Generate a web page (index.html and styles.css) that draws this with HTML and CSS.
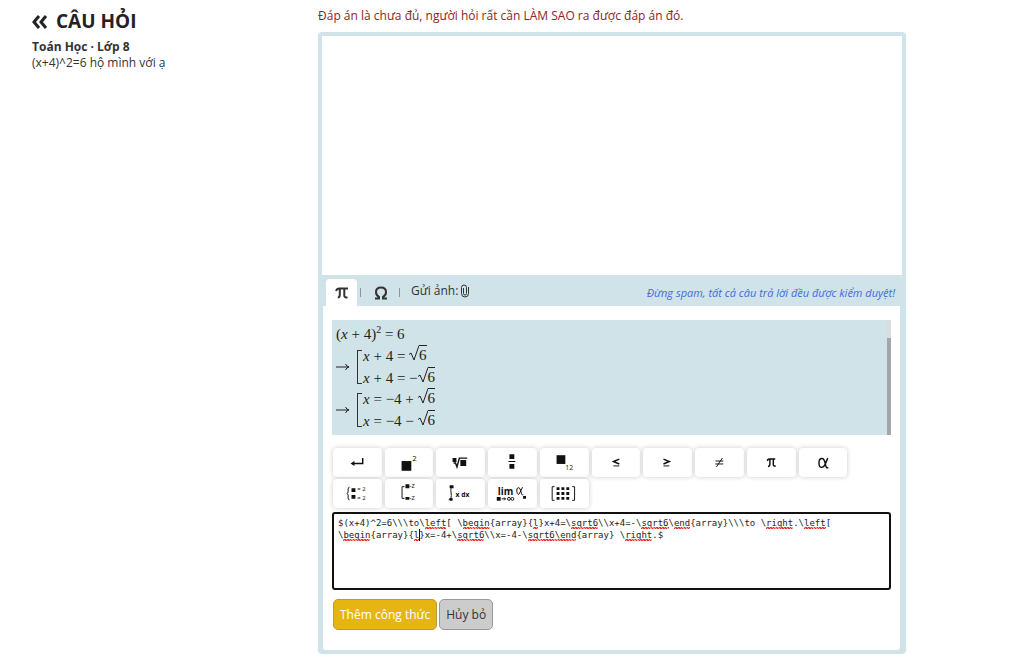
FILE: index.html
```html
<!DOCTYPE html>
<html lang="vi">
<head>
<meta charset="utf-8">
<meta name="viewport" content="width=device-width, initial-scale=1">
<title>Câu hỏi</title>
<link rel="stylesheet" href="styles.css">
</head>
<body>
<main class="page">
  <section class="question">
    <h1 class="question-title">
      <svg class="back-icon" viewBox="0 0 16 14" aria-hidden="true"><path d="M7 1 2 7l5 6M14 1 9 7l5 6"/></svg>
      <span>CÂU HỎI</span>
    </h1>
    <p class="question-subject">Toán Học · Lớp 8</p>
    <p class="question-text">(x+4)^2=6 hộ mình với ạ</p>
  </section>

  <section class="answer">
    <label class="answer-hint" for="answer">Đáp án là chưa đủ, người hỏi rất cần LÀM SAO ra được đáp án đó.</label>
    <div class="editor">
      <textarea class="answer-input" id="answer"></textarea>
      <div class="toolbar">
        <button class="tab tab-active" type="button" aria-label="Công thức"><svg viewBox="0 0 14 12"><path d="M1 4Q2 1.500 4 1.500H13M4.800 2V7.500Q4.800 10.500 2.800 10.500M9.300 2V8.500Q9.300 11 12.500 10.300"/></svg></button>
        <span class="divider"></span>
        <button class="tab" type="button" aria-label="Ký hiệu"><svg viewBox="0 0 14 14"><path d="M1 12.500H5V11Q2 9.500 2 6Q2 1.500 7 1.500T12 6Q12 9.500 9 11V12.500H13"/></svg></button>
        <span class="divider"></span>
        <button class="attach" type="button"><span>Gửi ảnh:</span><svg viewBox="0 0 10 14" aria-hidden="true"><path d="M3.500 4V9.500Q3.500 11 5 11T6.500 9.500V3.500Q6.500 1 4 1T1.500 3.500V9.500Q1.500 13 5 13T8.500 9.500V3"/></svg></button>
        <em class="warning">Đừng spam, tất cả câu trả lời đều được kiểm duyệt!</em>
      </div>

      <div class="panel">
        <div class="preview">
          <div class="math">
            <div class="math-line">(<i>x</i> + 4)<sup>2</sup> = 6</div>
            <div class="math-group">
              <svg class="arrow" viewBox="0 0 14 8"><path d="M0 4H13M9.500 1Q10.500 3.500 13 4Q10.500 4.500 9.500 7"/></svg>
              <div class="cases">
                <div class="math-line"><i>x</i> + 4 = <span class="root"><svg viewBox="0 0 10 16"><path d="M0 9.500 2 8 5 15 10 .5"/></svg><span>6</span></span></div>
                <div class="math-line"><i>x</i> + 4 = −<span class="root"><svg viewBox="0 0 10 16"><path d="M0 9.500 2 8 5 15 10 .5"/></svg><span>6</span></span></div>
              </div>
            </div>
            <div class="math-group">
              <svg class="arrow" viewBox="0 0 14 8"><path d="M0 4H13M9.500 1Q10.500 3.500 13 4Q10.500 4.500 9.500 7"/></svg>
              <div class="cases">
                <div class="math-line"><i>x</i> = −4 + <span class="root"><svg viewBox="0 0 10 16"><path d="M0 9.500 2 8 5 15 10 .5"/></svg><span>6</span></span></div>
                <div class="math-line"><i>x</i> = −4 − <span class="root"><svg viewBox="0 0 10 16"><path d="M0 9.500 2 8 5 15 10 .5"/></svg><span>6</span></span></div>
              </div>
            </div>
          </div>
          <div class="scroll-track"><div class="scroll-thumb"></div></div>
        </div>

        <div class="keys">
          <button class="key" type="button" aria-label="Xuống dòng"><svg viewBox="0 0 50 29"><path class="line" d="M30.500 10V15.500H20"/><path d="M18 15.500 22 13V18Z"/></svg></button>
          <button class="key" type="button" aria-label="Lũy thừa"><svg viewBox="0 0 50 29"><path d="M17 13H27V23H17Z"/><text x="28" y="13" font-size="8">2</text></svg></button>
          <button class="key" type="button" aria-label="Căn thức"><svg viewBox="0 0 50 29"><path d="M17 10H21V14H17ZM25 12H31V18H25Z"/><path class="line" d="M18 15H20L21.500 19 24 10H32"/></svg></button>
          <button class="key" type="button" aria-label="Phân số"><svg viewBox="0 0 50 29"><path d="M22 6H27V11H22ZM21 13H28V14H21ZM22 16H27V21H22Z"/></svg></button>
          <button class="key" type="button" aria-label="Chỉ số dưới"><svg viewBox="0 0 50 29"><path d="M17 7H26V16H17Z"/><text x="26" y="22" font-size="7">12</text></svg></button>
          <button class="key" type="button" aria-label="Nhỏ hơn hoặc bằng"><svg viewBox="0 0 50 29"><path class="line" d="M28 11 22 13.500 28 16"/><path class="thin" d="M22 18H28"/></svg></button>
          <button class="key" type="button" aria-label="Lớn hơn hoặc bằng"><svg viewBox="0 0 50 29"><path class="line" d="M21 11 27 13.500 21 16"/><path class="thin" d="M21 18H27"/></svg></button>
          <button class="key" type="button" aria-label="Khác"><svg viewBox="0 0 50 29"><path class="thin" d="M21 13H29M21 16H29M28 10 22 19"/></svg></button>
          <button class="key" type="button" aria-label="Pi"><svg viewBox="0 0 50 29"><path class="line" d="M21 13Q21 11 23 11H29M23.500 11V16Q23.500 18.500 21.500 18.500M27 11V16.500Q27 18.500 29.500 18"/></svg></button>
          <button class="key" type="button" aria-label="Alpha"><svg viewBox="0 0 50 29"><path class="line" d="M29.500 10 27 16Q25.500 19.500 23 19.500T20.500 15T23.500 10.500Q26 10.500 27 16T30 19.500"/></svg></button>
          <button class="key" type="button" aria-label="Hệ và"><svg viewBox="0 0 50 29"><path d="M19 9H23V13H19ZM19 16H23V20H19Z"/><path class="thin" d="M17 8Q15.500 8 15.500 10V13L14.500 14.500 15.500 16V19Q15.500 21 17 21"/><text x="25" y="12" font-size="6">= 2</text><text x="25" y="21" font-size="6">= 2</text></svg></button>
          <button class="key" type="button" aria-label="Hệ hoặc"><svg viewBox="0 0 50 29"><path d="M21 5H25V9H21ZM21 18H25V21H21Z"/><path class="thin" d="M20 7.500H17.500V19.500H20"/><text x="25" y="9" font-size="7">-z</text><text x="25" y="21" font-size="7">-z</text></svg></button>
          <button class="key" type="button" aria-label="Tích phân"><svg viewBox="0 0 50 29"><path d="M14 6H18V9H14ZM14 19H17V22H14Z"/><path class="thin" d="M17 8Q14.500 8 15.500 14T13 21"/><text class="bold" x="20" y="18" font-size="7">x dx</text></svg></button>
          <button class="key" type="button" aria-label="Giới hạn"><svg viewBox="0 0 50 29"><text class="bold" x="10" y="16" font-size="10">lim</text><path d="M9 18H13V22H9ZM36 17H39V20H36Z"/><path class="thin" d="M14 20H18M16.500 18.500 18 20 16.500 21.500"/><circle class="thin" cx="21.500" cy="20" r="1.500"/><circle class="thin" cx="25" cy="20" r="1.500"/><path class="thin" d="M35.500 8 33 13Q32 15.500 31 15.500T29.500 12T31.500 8.500Q33 8.500 34 13T36 15.500"/></svg></button>
          <button class="key" type="button" aria-label="Ma trận"><svg viewBox="0 0 50 29"><path d="M17 8h3v3h-3zM22 8h3v3h-3zM27 8h3v3h-3zM17 13h3v3h-3zM22 13h3v3h-3zM27 13h3v3h-3zM17 18h3v3h-3zM22 18h3v3h-3zM27 18h3v3h-3z"/><path class="thin" d="M15 7.500H12.500V21.500H15M33 7.500H35.500V21.500H33"/></svg></button>
        </div>

        <div class="formula">
          <textarea class="formula-input" aria-label="Công thức LaTeX" spellcheck="false">$(x+4)^2=6\\\to\left[ \begin{array}{l}x+4=\sqrt6\\x+4=-\sqrt6\end{array}\\\to \right.\left[
\begin{array}{l}x=-4+\sqrt6\\x=-4-\sqrt6\end{array} \right.$</textarea>
          <div class="marks" aria-hidden="true">
            <span class="mark" style="--c:16;--n:4"></span>
            <span class="mark" style="--c:23;--n:5"></span>
            <span class="mark" style="--c:36;--n:1"></span>
            <span class="mark" style="--c:43;--n:5"></span>
            <span class="mark" style="--c:56;--n:5"></span>
            <span class="mark" style="--c:62;--n:3"></span>
            <span class="mark" style="--c:79;--n:5"></span>
            <span class="mark" style="--c:86;--n:4"></span>
            <span class="mark row-2" style="--c:1;--n:5"></span>
            <span class="mark row-2" style="--c:14;--n:1"></span>
            <span class="mark row-2" style="--c:22;--n:5"></span>
            <span class="mark row-2" style="--c:35;--n:9"></span>
            <span class="mark row-2" style="--c:53;--n:5"></span>
            <span class="caret" style="--c:15"></span>
          </div>
        </div>

        <div class="actions">
          <button class="btn btn-primary" type="button">Thêm công thức</button>
          <button class="btn" type="button">Hủy bỏ</button>
        </div>
      </div>
    </div>
  </section>
</main>
</body>
</html>
```
FILE: styles.css
```css
* { box-sizing: border-box; }

body {
  margin: 0;
  background: #fff;
  color: #333;
  font: 12px/16px "Open Sans", "Noto Sans", sans-serif;
}

button, textarea { font: inherit; color: inherit; }
button { padding: 0; border: 0; background: none; cursor: pointer; }
textarea { display: block; width: 100%; resize: none; outline: none; }
p { margin: 0; }
svg { fill: none; stroke: currentColor; }

.page {
  display: grid;
  grid-template-columns: 286fr 588fr;
  padding: 8px 118px 2px 32px;
}

.question-title {
  display: flex;
  align-items: center;
  gap: 8px;
  margin: 0 0 4px;
  color: #222;
  font-size: 19px;
  line-height: 27px;
}
.back-icon { width: 16px; height: 14px; stroke-width: 3; }
.question-subject { font-weight: 700; }

.answer-hint { display: block; margin-bottom: 8px; color: #8b2525; }

.editor {
  border: 4px solid #d0e3e8;
  border-radius: 4px;
  background: #d0e3e8;
}
.answer-input { height: 239px; padding: 8px; border: 0; background: #fff; }

.toolbar {
  display: flex;
  align-items: center;
  height: 31px;
  padding: 4px 7px 0 4px;
}
.tab { display: grid; place-items: center; width: 31px; height: 27px; }
.tab svg { width: 14px; height: 14px; stroke-width: 2; }
.tab-active { border-radius: 4px 4px 0 0; background: #fff; }
.tab-active svg { height: 12px; }
.divider { width: 1px; height: 9px; margin: 0 4px 0 3px; background: #8c9598; }
.attach { display: flex; align-items: center; gap: 2px; margin: 0 0 4px 7px; }
.attach svg { width: 10px; height: 14px; }
.warning { margin-left: auto; color: #4169e1; font-size: 11px; }

.panel {
  margin: 0 2px 0 1px;
  padding: 14px 9px 20px;
  border-radius: 0 0 3px 3px;
  background: #fff;
}

.preview { display: flex; justify-content: space-between; height: 115px; background: #d0e3e8; }
.scroll-track { width: 4px; padding-top: 18px; background: #dcdcdc; }
.scroll-thumb { height: 100%; background: #a3a7a9; }
.math { padding: 3px 4px 0; color: #222; font: 15px/22px "Liberation Serif", serif; }
.math-line { height: 22px; white-space: nowrap; }
.math sup { font-size: 10px; line-height: 0; }
.math-group { display: flex; align-items: center; gap: 7px; height: 43px; }
.arrow { width: 14px; height: 8px; }
.cases {
  position: relative;
  padding-left: 6px;
}
.cases::before {
  content: "";
  position: absolute;
  inset: 5px auto 5px 0;
  width: 4px;
  border: 1px solid #333;
  border-right: 0;
}
.root { display: inline-flex; height: 16px; line-height: 18px; vertical-align: baseline; }
.root svg { width: 10px; height: 16px; }
.root span { border-top: 1px solid #222; }

.keys {
  display: grid;
  grid-template-columns: repeat(10, 1fr);
  gap: 2px 3px;
  width: 92%;
  margin: 13px 0 4px 1px;
}
.key {
  height: 29px;
  border-radius: 4px;
  background: #fff;
  box-shadow: 0 0 5px #ccc;
}
.key svg { display: block; width: 100%; height: 29px; fill: #111; stroke: none; }
.key .line, .key .thin { fill: none; stroke: #111; stroke-width: 1.5; }
.key .thin { stroke-width: 1; }
.key .bold { font-weight: 700; }

.formula { position: relative; font: 9px/12px "DejaVu Sans Mono", monospace; }
.formula-input {
  height: 78px;
  padding: 3px 4px;
  border: 2px solid #111;
  border-radius: 3px;
  background: #fff;
  color: #222;
}
.marks { position: absolute; inset: 5px 6px; pointer-events: none; }
.mark {
  position: absolute;
  top: 10px;
  left: calc(var(--c) * 1ch);
  width: calc(var(--n) * 1ch);
  height: 2px;
  background: repeating-linear-gradient(45deg, #f03030 0 1px, #f9a0a0 1px 2px);
}
.row-2 { top: 22px; }
.caret { position: absolute; top: 12px; left: calc(var(--c) * 1ch); width: 1px; height: 12px; background: #000; }

.actions { display: flex; gap: 2px; margin: 9px 0 0 1px; }
.btn {
  height: 31px;
  padding: 0 6px;
  border: 1px solid #999;
  border-radius: 5px;
  background: #ccc;
}
.btn-primary { border-color: #b89b35; background: #e5b611; color: #fff; }
```
